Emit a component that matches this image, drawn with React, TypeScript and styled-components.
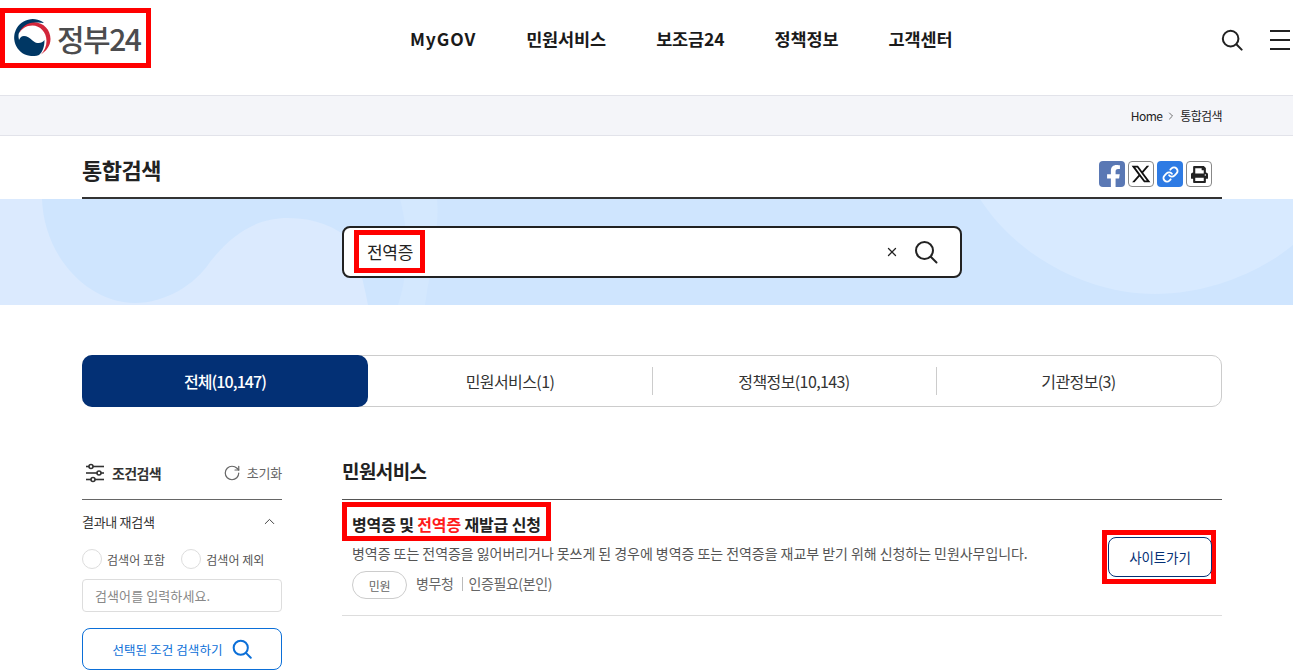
import styled, { createGlobalStyle } from "styled-components"
import { ChevronRight, ChevronUp, Link as LinkIcon, RotateCw, X as CloseIcon } from "lucide-react"
import { FaFacebookF, FaPrint } from "react-icons/fa"
import { RiTwitterXLine } from "react-icons/ri"

const FONT = `"Noto Sans CJK KR", "Noto Sans", sans-serif`

const GlobalStyle = createGlobalStyle`
   html, body {
      margin: 0;
      padding: 0;
      height: 672px;
      overflow: hidden;
      background: #fff;
      font-family: ${FONT};
      color: #222;
   }
   * { box-sizing: border-box; }
`

function SearchIcon({ size, color, weight }: { size: number; color: string; weight: number }) {
   return (
      <svg width={size} height={size} viewBox="0 0 24 24" fill="none" stroke={color} strokeWidth={weight} strokeLinecap="round">
         <circle cx="10.5" cy="10.5" r="8.5" />
         <line x1="17" y1="17" x2="22.5" y2="22.5" />
      </svg>
   )
}

function Taegeuk() {
   return (
      <svg width="38" height="38" viewBox="0 0 38 38">
         <path d="M31 4A18.500 18.500 0 1 0 26 36C29.500 33 31.500 28 31.500 21C29 25 23 25 19.500 21.500C16 18 11 15.500 8 18C7 19 6.500 20 6 21L5.500 18C5.500 16 5.500 15 6 14C10 6 20 2 31 4Z" fill="#003764" />
         <path d="M6 14.500C9 7 15 3.500 21 3.500C31 3.500 37.500 11 37.500 20C37.500 27 33 32 28 35.500C31.500 32 33.500 27 33.500 22C33.500 13 27 6.500 19.500 6.500C13 6.500 8.500 10 6 14.500Z" fill="#d2263a" />
      </svg>
   )
}

function SliderIcon() {
   return (
      <svg width="20" height="20" viewBox="0 0 20 20" fill="#fff" stroke="#333" strokeWidth="1.6">
         <line x1="1" y1="3.500" x2="19" y2="3.500" />
         <line x1="1" y1="10" x2="19" y2="10" />
         <line x1="1" y1="16.500" x2="19" y2="16.500" />
         <circle cx="6" cy="3.500" r="2" />
         <circle cx="14" cy="10" r="2" />
         <circle cx="8" cy="16.500" r="2" />
      </svg>
   )
}

function BannerArt() {
   return (
      <BannerSvg viewBox="0 0 1293 106" preserveAspectRatio="none">
         <path d="M0 0H42C44 58 88 104 135 104C165 104 195 86 210 63C235 31 260 19 288 19C315 19 335 28 350 40C358 60 364 85 368 106H0Z" fill="#dbeafe" />
         <path d="M400 0H437C440 30 430 70 425 106H398C410 70 408 30 400 0Z" fill="#d4e8fe" />
         <path d="M980 0C1015 55 1085 95 1155 95C1210 95 1262 72 1293 46V0Z" fill="#d8eaff" />
      </BannerSvg>
   )
}

export default function App() {
   return (
      <>
         <GlobalStyle />
         <Header>
            <LogoFrame>
               <Taegeuk />
               <LogoText>정부24</LogoText>
            </LogoFrame>
            <Nav>
               <NavItem $wide>MyGOV</NavItem>
               <NavItem>민원서비스</NavItem>
               <NavItem>보조금24</NavItem>
               <NavItem>정책정보</NavItem>
               <NavItem>고객센터</NavItem>
            </Nav>
            <HeaderTools>
               <SearchIcon size={22} color="#222" weight={2.2} />
               <MenuIcon><span /><span /><span /></MenuIcon>
            </HeaderTools>
         </Header>

         <Breadcrumb>
            <span>Home</span>
            <ChevronRight size={12} strokeWidth={1.5} color="#444" />
            <span>통합검색</span>
         </Breadcrumb>

         <TitleRow>
            <PageTitle>통합검색</PageTitle>
            <ShareList>
               <ShareButton $bg="#5a78b4" $fg="#fff"><FaFacebookF size={24} style={{ marginTop: 6, marginLeft: 3 }} /></ShareButton>
               <ShareButton $bg="#fff" $fg="#111" $line><RiTwitterXLine size={22} /></ShareButton>
               <ShareButton $bg="#2e7be4" $fg="#fff"><LinkIcon size={17} strokeWidth={2.6} /></ShareButton>
               <ShareButton $bg="#fff" $fg="#222" $line><FaPrint size={17} /></ShareButton>
            </ShareList>
         </TitleRow>

         <Banner>
            <BannerArt />
            <SearchBox>
               <QueryFrame>전역증</QueryFrame>
               <SearchActions>
                  <CloseIcon size={14} strokeWidth={2.2} color="#222" />
                  <SearchIcon size={24} color="#222" weight={2} />
               </SearchActions>
            </SearchBox>
         </Banner>

         <Tabs>
            <Tab $active>전체(10,147)</Tab>
            <Tab>민원서비스(1)</Tab>
            <Tab $divider>정책정보(10,143)</Tab>
            <Tab $divider>기관정보(3)</Tab>
         </Tabs>

         <Columns>
            <Sidebar>
               <SideHead>
                  <SideTitle><SliderIcon />조건검색</SideTitle>
                  <ResetLink><RotateCw size={18} strokeWidth={1.6} color="#666" />초기화</ResetLink>
               </SideHead>
               <FilterHead>
                  <span>결과내 재검색</span>
                  <ChevronUp size={17} strokeWidth={1.4} color="#444" />
               </FilterHead>
               <RadioRow>
                  <RadioLabel><RadioDot />검색어 포함</RadioLabel>
                  <RadioLabel><RadioDot />검색어 제외</RadioLabel>
               </RadioRow>
               <FilterInput>검색어를 입력하세요.</FilterInput>
               <ApplyButton>선택된 조건 검색하기<SearchIcon size={20} color="#0b6fd8" weight={2.4} /></ApplyButton>
            </Sidebar>

            <Results>
               <SectionTitle>민원서비스</SectionTitle>
               <ResultCard>
                  <ResultBody>
                     <ResultTitle><span>병역증 및 <Hit>전역증</Hit> 재발급 신청</span></ResultTitle>
                     <ResultDesc>병역증 또는 전역증을 잃어버리거나 못쓰게 된 경우에 병역증 또는 전역증을 재교부 받기 위해 신청하는 민원사무입니다.</ResultDesc>
                     <MetaRow>
                        <Pill>민원</Pill>
                        <MetaText>병무청</MetaText>
                        <MetaRule />
                        <MetaText>인증필요(본인)</MetaText>
                     </MetaRow>
                  </ResultBody>
                  <GoFrame>
                     <GoButton>사이트가기</GoButton>
                  </GoFrame>
               </ResultCard>
            </Results>
         </Columns>
      </>
   )
}

const Header = styled.header`
   height: 96px;
   display: flex;
   align-items: flex-start;
   border-bottom: 1px solid #e2e3ea;
`

const LogoFrame = styled.div`
   width: 151px;
   height: 60px;
   margin-top: 8px;
   border: 5px solid #ff0000;
   display: flex;
   align-items: center;
   padding-left: 8px;
   gap: 6px;
`

const LogoText = styled.span`
   font-size: 30px;
   font-weight: 500;
   line-height: 1;
   color: #4c4c4e;
   letter-spacing: -1.5px;
   white-space: nowrap;
`

const Nav = styled.nav`
   display: flex;
   gap: 50px;
   margin-left: 259px;
   margin-top: 26px;
`

const NavItem = styled.span<{ $wide?: boolean }>`
   font-size: 17.5px;
   font-weight: 700;
   line-height: 26px;
   color: #1a1a1a;
   letter-spacing: ${p => (p.$wide ? "0.9px" : "-0.1px")};
   white-space: nowrap;
`

const HeaderTools = styled.div`
   margin-left: auto;
   margin-top: 29px;
   padding-right: 3px;
   display: flex;
   align-items: center;
   gap: 27px;
`

const MenuIcon = styled.div`
   width: 20px;
   height: 20px;
   display: flex;
   flex-direction: column;
   justify-content: space-between;
   span {
      display: block;
      height: 2px;
      background: #222;
   }
`

const Breadcrumb = styled.div`
   height: 40px;
   background: #f4f5f9;
   border-bottom: 1px solid #e2e3ea;
   display: flex;
   align-items: center;
   justify-content: flex-end;
   gap: 3px;
   padding-right: 71px;
   font-size: 12px;
   letter-spacing: -0.6px;
   color: #222;
`

const TitleRow = styled.div`
   margin: 0 71px 0 82px;
   height: 63px;
   border-bottom: 2px solid #333;
   display: flex;
   align-items: flex-start;
   justify-content: space-between;
   padding: 18px 10px 0 0;
`

const PageTitle = styled.h1`
   margin: 0;
   font-size: 22px;
   line-height: 30px;
   font-weight: 700;
   letter-spacing: -0.5px;
   color: #222;
`

const ShareList = styled.div`
   display: flex;
   gap: 3px;
   padding-top: 7px;
`

const ShareButton = styled.div<{ $bg: string; $fg: string; $line?: boolean }>`
   width: 26px;
   height: 26px;
   border-radius: 4px;
   background: ${p => p.$bg};
   color: ${p => p.$fg};
   border: ${p => (p.$line ? "1px solid #888" : "none")};
   display: flex;
   align-items: center;
   justify-content: center;
   overflow: hidden;
`

const Banner = styled.section`
   position: relative;
   height: 106px;
   background: #cfe5fe;
   padding: 27px 0 0 342px;
   overflow: hidden;
`

const BannerSvg = styled.svg`
   position: absolute;
   inset: 0;
   width: 100%;
   height: 100%;
`

const SearchBox = styled.div`
   position: relative;
   width: 620px;
   height: 52px;
   background: #fff;
   border: 2px solid #222;
   border-radius: 8px;
   display: flex;
   align-items: flex-start;
   justify-content: space-between;
   padding: 2px 22px 0 10px;
`

const QueryFrame = styled.div`
   width: 71px;
   height: 43px;
   border: 5px solid #ff0000;
   display: flex;
   align-items: center;
   justify-content: center;
   padding-left: 1px;
   font-size: 17px;
   letter-spacing: -0.3px;
   color: #222;
`

const SearchActions = styled.div`
   display: flex;
   align-items: center;
   gap: 15px;
   height: 44px;
`

const Tabs = styled.nav`
   margin: 50px 71px 0 82px;
   height: 52px;
   border: 1px solid #ccc;
   border-radius: 10px;
   display: grid;
   grid-template-columns: 285px 284px 284px 1fr;
`

const Tab = styled.div<{ $active?: boolean; $divider?: boolean }>`
   position: relative;
   margin: ${p => (p.$active ? "-1px 0 -1px -1px" : "0")};
   display: flex;
   align-items: center;
   justify-content: center;
   font-size: 16px;
   letter-spacing: ${p => (p.$active ? "-0.9px" : "-0.6px")};
   color: ${p => (p.$active ? "#fff" : "#333")};
   font-weight: ${p => (p.$active ? 500 : 400)};
   background: ${p => (p.$active ? "#033075" : "transparent")};
   border-radius: ${p => (p.$active ? "10px" : "0")};
   &::before {
      content: "";
      display: ${p => (p.$divider ? "block" : "none")};
      position: absolute;
      left: 0;
      top: 11px;
      height: 28px;
      width: 1px;
      background: #ccc;
   }
`

const Columns = styled.div`
   margin: 48px 71px 0 82px;
   display: grid;
   grid-template-columns: 200px 1fr;
   column-gap: 60px;
`

const Sidebar = styled.aside`
   display: flex;
   flex-direction: column;
`

const SideHead = styled.div`
   height: 45px;
   border-bottom: 1px solid #666;
   display: flex;
   align-items: flex-start;
   justify-content: space-between;
   padding-top: 8px;
`

const SideTitle = styled.div`
   display: flex;
   align-items: center;
   gap: 7px;
   padding-left: 3px;
   font-size: 14px;
   line-height: 20px;
   font-weight: 700;
   letter-spacing: -0.6px;
   color: #333;
`

const ResetLink = styled.div`
   display: flex;
   align-items: center;
   gap: 6px;
   font-size: 13px;
   line-height: 20px;
   letter-spacing: -0.2px;
   color: #666;
`

const FilterHead = styled.div`
   display: flex;
   align-items: center;
   justify-content: space-between;
   height: 22px;
   margin-top: 10px;
   padding-right: 4px;
   font-size: 13px;
   letter-spacing: -0.3px;
   color: #333;
`

const RadioRow = styled.div`
   display: flex;
   gap: 16px;
   margin-top: 17px;
`

const RadioLabel = styled.label`
   display: flex;
   align-items: center;
   gap: 5px;
   font-size: 12px;
   letter-spacing: 0.05px;
   color: #555;
`

const RadioDot = styled.span`
   width: 20px;
   height: 20px;
   border-radius: 50%;
   border: 1px solid #ddd;
   background: #fff;
`

const FilterInput = styled.div`
   height: 33px;
   margin-top: 10px;
   border: 1px solid #ddd;
   border-radius: 4px;
   padding-left: 12px;
   display: flex;
   align-items: center;
   font-size: 13px;
   letter-spacing: 0.1px;
   color: #888;
`

const ApplyButton = styled.div`
   height: 42px;
   margin-top: 16px;
   border: 1px solid #0b6fd8;
   border-radius: 8px;
   display: flex;
   align-items: center;
   justify-content: center;
   gap: 9px;
   font-size: 12.5px;
   letter-spacing: 0.1px;
   color: #0b6fd8;
`

const Results = styled.main`
   display: flex;
   flex-direction: column;
`

const SectionTitle = styled.h2`
   margin: 0;
   height: 45px;
   border-bottom: 1px solid #555;
   padding-top: 3px;
   font-size: 19px;
   line-height: 26px;
   font-weight: 700;
   letter-spacing: -0.6px;
   color: #222;
`

const ResultCard = styled.article`
   height: 116px;
   border-bottom: 1px solid #ddd;
   display: flex;
   justify-content: space-between;
   align-items: flex-start;
`

const ResultBody = styled.div`
   display: flex;
   flex-direction: column;
   align-items: flex-start;
   padding-top: 2px;
`

const ResultTitle = styled.h3`
   margin: 0;
   height: 39px;
   border: 5px solid #ff0000;
   padding: 5px 5px 0;
   display: flex;
   align-items: center;
   white-space: nowrap;
   font-size: 16px;
   font-weight: 700;
   letter-spacing: -0.15px;
   color: #222;
`

const Hit = styled.span`
   color: #ff1a1a;
`

const ResultDesc = styled.p`
   margin: 2px 0 0 10px;
   font-size: 14px;
   line-height: 20px;
   letter-spacing: -0.05px;
   color: #555;
   white-space: nowrap;
`

const MetaRow = styled.div`
   display: flex;
   align-items: center;
   margin: 8px 0 0 10px;
   font-size: 14px;
   letter-spacing: -0.4px;
   color: #666;
`

const MetaText = styled.span`
   margin-top: -4px;
`

const Pill = styled.span`
   width: 55px;
   height: 28px;
   border: 1px solid #ccc;
   border-radius: 14px;
   display: flex;
   align-items: center;
   justify-content: center;
   margin-right: 9px;
   font-size: 12px;
   color: #666;
`

const MetaRule = styled.span`
   width: 1px;
   height: 14px;
   margin: -3px 5px 0 9px;
   background: #bbb;
`

const GoFrame = styled.div`
   width: 114px;
   height: 54px;
   margin: 30px 6px 0 0;
   border: 5px solid #ff0000;
   padding: 2px 0 2px 1px;
   flex: none;
`

const GoButton = styled.div`
   height: 40px;
   width: 104px;
   background: #fff;
   border: 1px solid #033075;
   border-radius: 8px;
   display: flex;
   align-items: center;
   justify-content: center;
   padding-bottom: 1px;
   font-size: 13.5px;
   letter-spacing: -0.15px;
   color: #033075;
`
